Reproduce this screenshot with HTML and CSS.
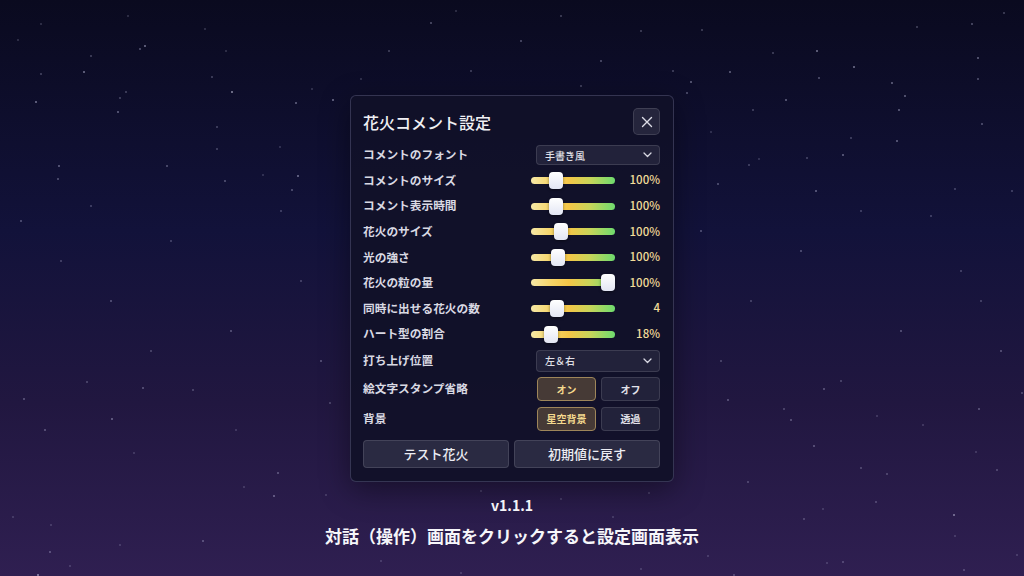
FILE: index.html
```html
<!DOCTYPE html>
<html lang="ja">
<head>
  <meta charset="UTF-8">
  <meta name="viewport" content="width=device-width, initial-scale=1.0">
  <title>花火コメント設定</title>
  <link rel="stylesheet" href="styles.css">
</head>
<body>
  <div class="stars"></div>

  <main class="page">
    <section class="panel">
      <header class="panel-head">
        <h1>花火コメント設定</h1>
        <button class="close" aria-label="閉じる">
          <svg width="12" height="12" viewBox="0 0 12 12"><path d="M1.5 1.5 L10.5 10.5 M10.5 1.5 L1.5 10.5" stroke="#dcdce6" stroke-width="1.4" stroke-linecap="round"/></svg>
        </button>
      </header>

      <div class="rows">
        <div class="row">
          <span class="label">コメントのフォント</span>
          <div class="select">
            <span>手書き風</span>
            <svg width="9" height="6" viewBox="0 0 9 6"><path d="M1 1 L4.5 4.5 L8 1" fill="none" stroke="#d8d8e2" stroke-width="1.3" stroke-linecap="round" stroke-linejoin="round"/></svg>
          </div>
        </div>

        <div class="row">
          <span class="label">コメントのサイズ</span>
          <div class="control"><input type="range" class="slider" min="0" max="100" value="25"><span class="value">100%</span></div>
        </div>
        <div class="row">
          <span class="label">コメント表示時間</span>
          <div class="control"><input type="range" class="slider" min="0" max="100" value="25"><span class="value">100%</span></div>
        </div>
        <div class="row">
          <span class="label">花火のサイズ</span>
          <div class="control"><input type="range" class="slider" min="0" max="100" value="33"><span class="value">100%</span></div>
        </div>
        <div class="row">
          <span class="label">光の強さ</span>
          <div class="control"><input type="range" class="slider" min="0" max="100" value="29"><span class="value">100%</span></div>
        </div>
        <div class="row">
          <span class="label">花火の粒の量</span>
          <div class="control"><input type="range" class="slider" min="0" max="100" value="100"><span class="value">100%</span></div>
        </div>
        <div class="row">
          <span class="label">同時に出せる花火の数</span>
          <div class="control"><input type="range" class="slider" min="0" max="100" value="27"><span class="value">4</span></div>
        </div>
        <div class="row">
          <span class="label">ハート型の割合</span>
          <div class="control"><input type="range" class="slider" min="0" max="100" value="19"><span class="value">18%</span></div>
        </div>

        <div class="row row-tall">
          <span class="label">打ち上げ位置</span>
          <div class="select">
            <span>左＆右</span>
            <svg width="9" height="6" viewBox="0 0 9 6"><path d="M1 1 L4.5 4.5 L8 1" fill="none" stroke="#d8d8e2" stroke-width="1.3" stroke-linecap="round" stroke-linejoin="round"/></svg>
          </div>
        </div>

        <div class="row row-toggle">
          <span class="label">絵文字スタンプ省略</span>
          <div class="toggle">
            <button class="opt active">オン</button>
            <button class="opt">オフ</button>
          </div>
        </div>
        <div class="row row-toggle">
          <span class="label">背景</span>
          <div class="toggle">
            <button class="opt active">星空背景</button>
            <button class="opt">透過</button>
          </div>
        </div>
      </div>

      <div class="actions">
        <button class="action">テスト花火</button>
        <button class="action">初期値に戻す</button>
      </div>
    </section>

    <p class="version">v1.1.1</p>
    <p class="hint">対話（操作）画面をクリックすると設定画面表示</p>
  </main>
</body>
</html>
```

FILE: styles.css
```css
* {
  box-sizing: border-box;
}

body {
  margin: 0;
  height: 100vh;
  overflow: hidden;
  font-family: "Noto Sans CJK JP", "Noto Sans", sans-serif;
  color: #e6e6ee;
  background: linear-gradient(180deg, #0a0a1f 0%, #12123a 40%, #211740 70%, #2f1f51 100%);
  position: relative;
}

/* star field */
.stars {
  position: absolute;
  inset: 0;
  pointer-events: none;
  opacity: 0.75;
}

.stars::before,
.stars::after {
  content: "";
  position: absolute;
  left: 0;
  top: 0;
  width: 2px;
  height: 2px;
  border-radius: 50%;
}

.stars::before {
  box-shadow:
    35px 101px rgba(210,210,240,.7), 83px 71px rgba(210,210,240,.7), 144px 45px rgba(210,210,240,.7),
    139px 48px rgba(210,210,240,.5), 231px 91px rgba(220,220,245,.8), 295px 102px rgba(210,210,240,.6),
    332px 99px rgba(210,210,240,.7), 117px 111px rgba(210,210,240,.6), 58px 165px rgba(210,210,240,.6),
    57px 178px rgba(210,210,240,.5), 166px 165px rgba(210,210,240,.5), 224px 180px rgba(210,210,240,.5),
    297px 175px rgba(210,210,240,.7), 291px 189px rgba(210,210,240,.5), 216px 148px rgba(210,210,240,.4),
    216px 126px rgba(210,210,240,.4), 90px 55px rgba(210,210,240,.4), 40px 23px rgba(210,210,240,.3),
    17px 39px rgba(210,210,240,.3), 127px 15px rgba(210,210,240,.3), 204px 28px rgba(210,210,240,.3),
    225px 50px rgba(210,210,240,.3), 211px 76px rgba(210,210,240,.4), 311px 88px rgba(210,210,240,.3),
    279px 146px rgba(210,210,240,.3), 262px 174px rgba(210,210,240,.3), 119px 97px rgba(210,210,240,.4),
    125px 91px rgba(210,210,240,.4), 40px 73px rgba(210,210,240,.4),
    701px 29px rgba(210,210,240,.4), 816px 50px rgba(210,210,240,.7), 853px 66px rgba(210,210,240,.7),
    729px 71px rgba(210,210,240,.6), 690px 81px rgba(210,210,240,.6), 686px 92px rgba(210,210,240,.5),
    785px 99px rgba(210,210,240,.6), 772px 52px rgba(210,210,240,.4), 818px 77px rgba(210,210,240,.5),
    891px 82px rgba(210,210,240,.6), 904px 95px rgba(210,210,240,.6), 898px 109px rgba(210,210,240,.6),
    977px 57px rgba(210,210,240,.6), 977px 78px rgba(210,210,240,.5), 971px 23px rgba(210,210,240,.5),
    1003px 12px rgba(210,210,240,.4), 916px 26px rgba(210,210,240,.4), 752px 109px rgba(210,210,240,.4),
    981px 123px rgba(210,210,240,.5), 896px 140px rgba(210,210,240,.6), 842px 154px rgba(210,210,240,.6),
    850px 137px rgba(210,210,240,.4), 806px 157px rgba(210,210,240,.4), 758px 158px rgba(210,210,240,.3),
    748px 164px rgba(210,210,240,.4), 717px 183px rgba(210,210,240,.5), 815px 190px rgba(210,210,240,.6),
    954px 188px rgba(210,210,240,.4), 1011px 190px rgba(210,210,240,.4), 710px 131px rgba(210,210,240,.3),
    388px 50px rgba(210,210,240,.4), 430px 22px rgba(210,210,240,.5), 470px 70px rgba(210,210,240,.4),
    520px 40px rgba(210,210,240,.5), 560px 15px rgba(210,210,240,.4), 600px 60px rgba(210,210,240,.5),
    640px 30px rgba(210,210,240,.4), 672px 70px rgba(210,210,240,.4), 455px 10px rgba(210,210,240,.3),
    580px 85px rgba(210,210,240,.4), 360px 78px rgba(210,210,240,.3);
}

.stars::after {
  box-shadow:
    20px 220px rgba(210,210,240,.5), 60px 260px rgba(210,210,240,.4), 110px 300px rgba(210,210,240,.5),
    170px 240px rgba(210,210,240,.4), 230px 330px rgba(210,210,240,.5), 280px 210px rgba(210,210,240,.4),
    320px 360px rgba(210,210,240,.5), 150px 350px rgba(210,210,240,.4), 90px 205px rgba(210,210,240,.4),
    300px 280px rgba(210,210,240,.4), 700px 230px rgba(210,210,240,.5), 750px 300px rgba(210,210,240,.4),
    800px 250px rgba(210,210,240,.5), 860px 210px rgba(210,210,240,.4), 900px 330px rgba(210,210,240,.5),
    960px 270px rgba(210,210,240,.4), 1000px 350px rgba(210,210,240,.5), 720px 360px rgba(210,210,240,.4),
    840px 380px rgba(210,210,240,.4), 930px 215px rgba(210,210,240,.4), 980px 300px rgba(210,210,240,.4),
    23px 398px rgba(210,210,240,.5), 86px 381px rgba(210,210,240,.4), 142px 387px rgba(210,210,240,.5),
    192px 389px rgba(210,210,240,.4), 111px 418px rgba(210,210,240,.6), 44px 429px rgba(210,210,240,.5),
    329px 402px rgba(210,210,240,.4), 235px 429px rgba(210,210,240,.3), 133px 452px rgba(210,210,240,.3),
    277px 472px rgba(210,210,240,.5), 273px 495px rgba(210,210,240,.6), 325px 494px rgba(210,210,240,.3),
    12px 516px rgba(210,210,240,.3), 50px 524px rgba(210,210,240,.3), 202px 540px rgba(210,210,240,.5),
    119px 544px rgba(210,210,240,.3), 49px 551px rgba(210,210,240,.5), 37px 574px rgba(220,220,245,.8),
    69px 565px rgba(210,210,240,.3), 243px 486px rgba(210,210,240,.3),
    823px 388px rgba(210,210,240,.5), 727px 399px rgba(210,210,240,.5), 783px 408px rgba(210,210,240,.4),
    790px 419px rgba(210,210,240,.5), 978px 408px rgba(210,210,240,.5), 1021px 392px rgba(210,210,240,.4),
    876px 415px rgba(210,210,240,.3), 922px 424px rgba(210,210,240,.3), 813px 445px rgba(210,210,240,.5),
    860px 467px rgba(210,210,240,.4), 886px 473px rgba(210,210,240,.4), 996px 469px rgba(210,210,240,.4),
    975px 451px rgba(210,210,240,.3), 747px 481px rgba(210,210,240,.4), 875px 501px rgba(210,210,240,.4),
    953px 514px rgba(220,220,245,.7), 822px 508px rgba(210,210,240,.3), 803px 518px rgba(210,210,240,.4),
    954px 535px rgba(210,210,240,.3), 1016px 554px rgba(210,210,240,.3), 842px 561px rgba(210,210,240,.4),
    826px 562px rgba(210,210,240,.3), 963px 569px rgba(210,210,240,.4), 707px 555px rgba(210,210,240,.3),
    733px 574px rgba(210,210,240,.4), 380px 560px rgba(210,210,240,.3), 460px 572px rgba(210,210,240,.3),
    560px 498px rgba(210,210,240,.3), 640px 568px rgba(210,210,240,.3), 612px 516px rgba(210,210,240,.3),
    480px 490px rgba(210,210,240,.3), 648px 492px rgba(210,210,240,.3);
}

.page {
  position: relative;
  display: flex;
  flex-direction: column;
  align-items: center;
  padding-top: 95px;
}

/* settings panel */
.panel {
  width: 324px;
  padding: 12px 13px 13px 12px;
  background: rgba(17, 17, 40, 0.94);
  border: 1px solid rgba(120, 120, 160, 0.35);
  border-radius: 6px;
  box-shadow: 0 8px 30px rgba(0, 0, 0, 0.4);
}

.panel-head {
  display: flex;
  align-items: center;
  justify-content: space-between;
  height: 27px;
  margin-bottom: 10px;
}

.panel-head h1 {
  margin: 0;
  font-size: 16px;
  font-weight: 500;
  color: #f0f0f4;
}

.close {
  width: 27px;
  height: 27px;
  display: flex;
  align-items: center;
  justify-content: center;
  padding: 0;
  background: #25253c;
  border: 1px solid rgba(255, 255, 255, 0.12);
  border-radius: 5px;
}

.rows {
  display: flex;
  flex-direction: column;
  gap: 5.6px;
}

.row {
  display: flex;
  align-items: center;
  justify-content: space-between;
  height: 20px;
}

.row-tall {
  height: 22px;
}

.row-toggle {
  height: 24px;
}

.label {
  font-size: 11.7px;
  font-weight: 700;
  line-height: 1;
  margin-top: -2px;
  color: #d9d9e3;
}

/* select box */
.select {
  width: 124px;
  height: 100%;
  display: flex;
  align-items: center;
  justify-content: space-between;
  padding: 0 7px 0 8px;
  font-size: 10px;
  font-weight: 500;
  color: #e0e0e8;
  background: #22223a;
  border: 1px solid rgba(255, 255, 255, 0.12);
  border-radius: 4px;
}

/* sliders */
.control {
  width: 129px;
  display: flex;
  align-items: center;
}

.slider {
  -webkit-appearance: none;
  appearance: none;
  width: 84px;
  height: 18px;
  margin: 0;
  background: transparent;
}

.slider::-webkit-slider-runnable-track {
  height: 7px;
  border-radius: 4px;
  background: linear-gradient(90deg, #f6e8a6 0%, #f6d466 25%, #f4c647 45%, #c8d559 70%, #6edb6e 100%);
}

.slider::-webkit-slider-thumb {
  -webkit-appearance: none;
  width: 14px;
  height: 17px;
  margin-top: -5px;
  border-radius: 4px;
  background: linear-gradient(180deg, #ffffff 0%, #e3e6f4 100%);
  box-shadow: 0 1px 3px rgba(0, 0, 0, 0.45);
}

.value {
  flex: 1;
  text-align: right;
  font-size: 11.5px;
  font-weight: 500;
  line-height: 1;
  margin-top: -1px;
  color: #f2dc9a;
}

/* toggles */
.toggle {
  width: 123px;
  height: 100%;
  display: flex;
  gap: 5px;
}

.opt {
  flex: 1;
  padding: 0;
  font-family: inherit;
  font-size: 10px;
  font-weight: 700;
  color: #e2e2ea;
  background: #22223a;
  border: 1px solid rgba(255, 255, 255, 0.12);
  border-radius: 4px;
}

.opt.active {
  color: #f4d98e;
  background: #463a36;
  border-color: #9e865a;
}

/* bottom buttons */
.actions {
  display: grid;
  grid-template-columns: 1fr 1fr;
  gap: 5px;
  margin-top: 9px;
}

.action {
  height: 28px;
  padding: 0;
  font-family: inherit;
  font-size: 13px;
  font-weight: 500;
  color: #ececf2;
  background: #2a2a42;
  border: 1px solid rgba(255, 255, 255, 0.12);
  border-radius: 4px;
}

.version {
  margin: 13px 0 0;
  font-size: 14px;
  font-weight: 700;
  line-height: 20px;
  color: #f4f4f8;
}

.hint {
  margin: 8px 0 0;
  font-size: 17px;
  font-weight: 700;
  line-height: 25px;
  color: #f6f6fa;
}
```
